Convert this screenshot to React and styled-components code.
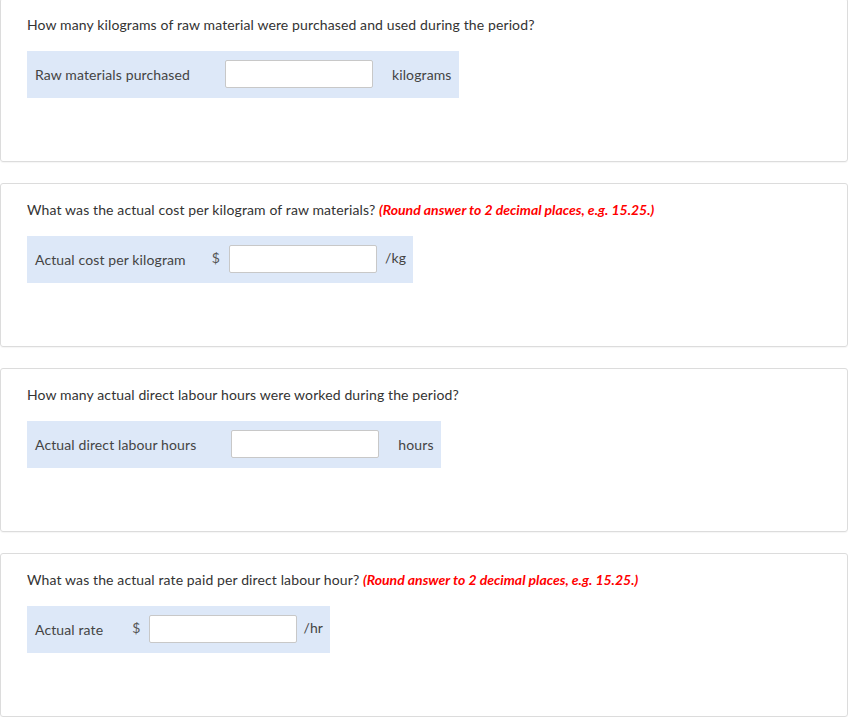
import React from "react";
import styled, { createGlobalStyle } from "styled-components";

const Global = createGlobalStyle`
  html, body { margin: 0; padding: 0; background: #fff; }
  body { font-family: Lato, "Open Sans", sans-serif; color: #333; overflow: hidden; }
`;

const Page = styled.div`
  display: flex;
  flex-direction: column;
  gap: 21px;
  margin-top: -2px;
  width: 848px;
`;

const Card = styled.section`
  box-sizing: border-box;
  height: 164px;
  border: 1px solid #dcdcdc;
  border-radius: 3px;
  box-shadow: 0 1px 1px rgba(0, 0, 0, 0.04);
  padding: 17px 26px 0;
`;

const Question = styled.p`
  margin: 0;
  font-size: 14px;
  line-height: 18px;
  letter-spacing: 0.12px;
  color: #333;
`;

const Hint = styled.strong`
  color: #f00;
  font-weight: 700;
  font-style: italic;
  letter-spacing: 0;
`;

const AnswerRow = styled.div`
  display: inline-flex;
  align-items: center;
  margin-top: 17px;
  padding: 9px 7px 10px 8px;
  background: #dde8f8;
  font-size: 14px;
  letter-spacing: 0.12px;
  color: #444;
`;

const Label = styled.span`
  padding-right: ${(p) => p.$gap}px;
  white-space: nowrap;
`;

const Currency = styled.span`
  margin-right: 9px;
  margin-top: -3px;
  color: #555;
`;

const Field = styled.input`
  box-sizing: border-box;
  width: 148px;
  height: 28px;
  border: 1px solid #c8c8c8;
  border-radius: 2px;
  background: #fff;
  font: inherit;
  padding: 0 6px;
  outline: none;
`;

const Unit = styled.span`
  padding-left: ${(p) => p.$gap}px;
  white-space: nowrap;
  margin-top: ${(p) => (p.$raised ? -4 : 0)}px;
`;

const items = [
  {
    q: "How many kilograms of raw material were purchased and used during the period?",
    label: "Raw materials purchased",
    labelGap: 35,
    unit: "kilograms",
    unitGap: 19,
  },
  {
    q: "What was the actual cost per kilogram of raw materials?",
    hint: true,
    label: "Actual cost per kilogram",
    labelGap: 26,
    currency: true,
    unit: "/kg",
    unitGap: 8,
    raised: true,
  },
  {
    q: "How many actual direct labour hours were worked during the period?",
    label: "Actual direct labour hours",
    labelGap: 35,
    unit: "hours",
    unitGap: 19,
  },
  {
    q: "What was the actual rate paid per direct labour hour?",
    hint: true,
    label: "Actual rate",
    labelGap: 29,
    currency: true,
    unit: "/hr",
    unitGap: 6,
    raised: true,
  },
];

export default function App() {
  return (
    <>
      <Global />
      <Page>
        {items.map((it, i) => (
          <Card key={i}>
            <Question>
              {it.q}
              {it.hint && (
                <>
                  {" "}
                  <Hint>(Round answer to 2 decimal places, e.g. 15.25.)</Hint>
                </>
              )}
            </Question>
            <AnswerRow>
              <Label $gap={it.labelGap}>{it.label}</Label>
              {it.currency && <Currency>$</Currency>}
              <Field type="text" aria-label={it.label} />
              <Unit $gap={it.unitGap} $raised={it.raised}>{it.unit}</Unit>
            </AnswerRow>
          </Card>
        ))}
      </Page>
    </>
  );
}
